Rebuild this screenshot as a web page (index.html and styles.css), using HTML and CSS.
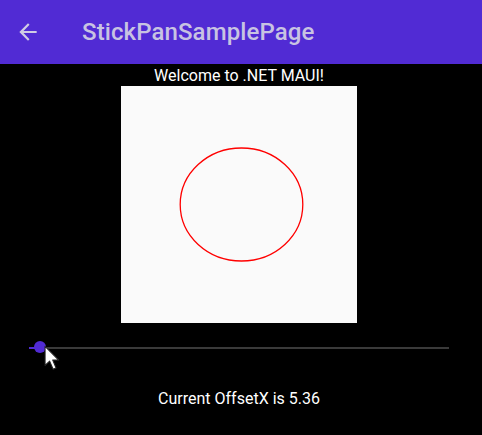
FILE: index.html
```html
<!DOCTYPE html>
<html>
<head>
<meta charset="utf-8">
<link rel="stylesheet" href="styles.css">
</head>
<body>
<header class="appbar">
  <svg class="back" width="26" height="26" viewBox="0 0 24 24"><path d="M20 11H7.83l5.59-5.59L12 4l-8 8 8 8 1.41-1.41L7.83 13H20v-2z" fill="#d0cce4"/></svg>
  <div class="title">StickPanSamplePage</div>
</header>
<main class="content">
  <div class="welcome">Welcome to .NET MAUI!</div>
  <div class="canvas">
    <svg width="236" height="237" viewBox="0 0 236 237"><ellipse cx="120.5" cy="118.5" rx="61.3" ry="56.5" fill="none" stroke="#ff0000" stroke-width="1.3"/></svg>
  </div>
  <div class="slider">
    <div class="track">
      <div class="track-active"></div>
      <div class="thumb"></div>
      <svg class="cursor" width="17" height="27" viewBox="0 0 16 25"><path d="M1 1 L1 19 L5.3 15 L8.6 22.6 L11.4 21.4 L8.2 14 L13.8 14 Z" fill="#ffffff" stroke="#222" stroke-width="1" stroke-linejoin="round"/></svg>
    </div>
  </div>
  <div class="status">Current OffsetX is 5.36</div>
</main>
</body>
</html>
```
FILE: styles.css
```css
html, body {
  margin: 0;
  padding: 0;
  background: #000;
}
body {
  width: 482px;
  height: 435px;
  overflow: hidden;
  font-family: Roboto, "Liberation Sans", sans-serif;
}
.appbar {
  height: 64px;
  background: #512bd4;
  display: flex;
  align-items: center;
}
.back {
  margin-left: 15px;
  flex: none;
}
.title {
  margin-left: 41px;
  font-size: 24px;
  font-weight: 500;
  color: #c8c3e2;
  letter-spacing: 0.1px;
}
.content {
  width: 478px;
  display: flex;
  flex-direction: column;
  align-items: center;
}
.welcome {
  padding-top: 2px;
  line-height: 20px;
  font-size: 16px;
  color: #fff;
}
.canvas {
  width: 236px;
  height: 237px;
  background: #fafafa;
}
.canvas svg {
  display: block;
}
.slider {
  align-self: stretch;
  height: 50px;
  padding: 0 29px;
  display: flex;
  align-items: center;
}
.track {
  position: relative;
  flex: 1;
  height: 2px;
  background: #3a3a3a;
}
.track-active {
  width: 11px;
  height: 2px;
  background: #512bd4;
}
.thumb {
  position: absolute;
  left: 5px;
  top: -6px;
  width: 12px;
  height: 12px;
  border-radius: 50%;
  background: #512bd4;
}
.cursor {
  position: absolute;
  left: 15px;
  top: -2px;
}
.status {
  margin-top: 16px;
  line-height: 19px;
  font-size: 16px;
  color: #fff;
}
```
